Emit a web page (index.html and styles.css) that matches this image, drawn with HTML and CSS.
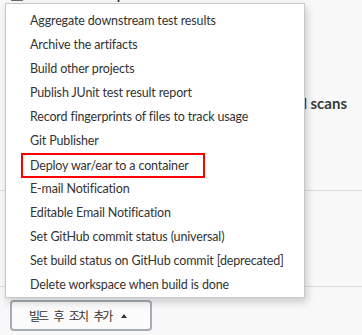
FILE: index.html
```html
<!DOCTYPE html>
<html lang="ko">

<head>
    <meta charset="UTF-8">
    <meta name="viewport" content="width=device-width, initial-scale=1.0">
    <title>빌드 후 조치</title>
    <link rel="stylesheet" href="styles.css">
</head>

<body>
    <div class="config">
        <div class="option first">
            <span class="check"></span>
            <span class="option-label">Delete workspace before build starts</span>
        </div>
        <div class="option scans">
            <span class="check"></span>
            <span class="option-label">Discard old items after periodical scans</span>
        </div>
        <div class="section-end"></div>
        <div class="section-end second"></div>

        <div class="post-build">
            <button class="btn-add" type="button"><span class="btn-text">빌드 후 조치 추가</span><span class="caret"></span></button>
        </div>
    </div>

    <!-- dropdown opened by the button -->
    <ul class="menu">
        <li>Aggregate downstream test results</li>
        <li>Archive the artifacts</li>
        <li>Build other projects</li>
        <li>Publish JUnit test result report</li>
        <li>Record fingerprints of files to track usage</li>
        <li>Git Publisher</li>
        <li><span class="marked">Deploy war/ear to a container</span></li>
        <li>E-mail Notification</li>
        <li>Editable Email Notification</li>
        <li>Set GitHub commit status (universal)</li>
        <li>Set build status on GitHub commit [deprecated]</li>
        <li>Delete workspace when build is done</li>
    </ul>
</body>

</html>
```

FILE: styles.css
```css
body {
    margin: 0;
    padding: 0;
    background-color: #f8f8f8;
    font-family: 'Lato', 'Noto Sans CJK KR', sans-serif;
    color: #333;
    height: 335px;
    overflow: hidden;
}

.config {
    padding: 0 10px;
}

.option {
    display: flex;
    align-items: center;
    gap: 10px;
    height: 20px;
}

.option.first {
    margin-top: -16px;
}

.option.scans {
    margin-top: 89px;
    justify-content: space-between;
    padding-right: 5px;
}

.check {
    flex: none;
    width: 12px;
    height: 12px;
    border: 1px solid #666;
    border-radius: 2px;
    background-color: #fff;
}

.option-label {
    font-size: 14px;
    font-weight: bold;
    white-space: nowrap;
}

.scans .option-label {
    font-size: 15px;
    color: #3a3a3a;
}

.section-end {
    margin-top: 77px;
    border-top: 1px solid #dcdcdc;
    margin-left: -10px;
    margin-right: -10px;
}

.section-end.second {
    margin-top: 95px;
}

.post-build {
    margin-top: 13px;
}

.btn-add {
    display: flex;
    align-items: center;
    gap: 10px;
    color: #333;
    background-color: #fbfbfb;
    border: 2px solid #a4adb6;
    border-radius: 4px;
    width: 142px;
    height: 31px;
    padding: 0 0 0 17px;
}

.btn-text {
    font-family: 'Noto Sans CJK KR', sans-serif;
    font-size: 12px;
    letter-spacing: -2px;
    word-spacing: 5px;
    white-space: nowrap;
}

.caret {
    flex: none;
    width: 0;
    height: 0;
    border-left: 3.5px solid transparent;
    border-right: 3.5px solid transparent;
    border-bottom: 4px solid #333;
}

/* Dropdown menu */
.menu {
    position: absolute;
    top: 3px;
    left: 5px;
    width: 298px;
    margin: 0;
    padding: 5px 0 0;
    list-style: none;
    background-color: #fff;
    border: 1px solid #c8c8c8;
    box-shadow: 2px 4px 8px rgba(0, 0, 0, 0.18);
}

.menu li {
    height: 24px;
    line-height: 24px;
    padding-left: 24px;
    font-size: 12.5px;
    letter-spacing: -0.15px;
    color: #333;
    white-space: nowrap;
}

.marked {
    display: inline-block;
    margin-left: -9px;
    padding: 0 7px;
    line-height: 21px;
    border: 2px solid #f00;
    width: 166px;
}
```
